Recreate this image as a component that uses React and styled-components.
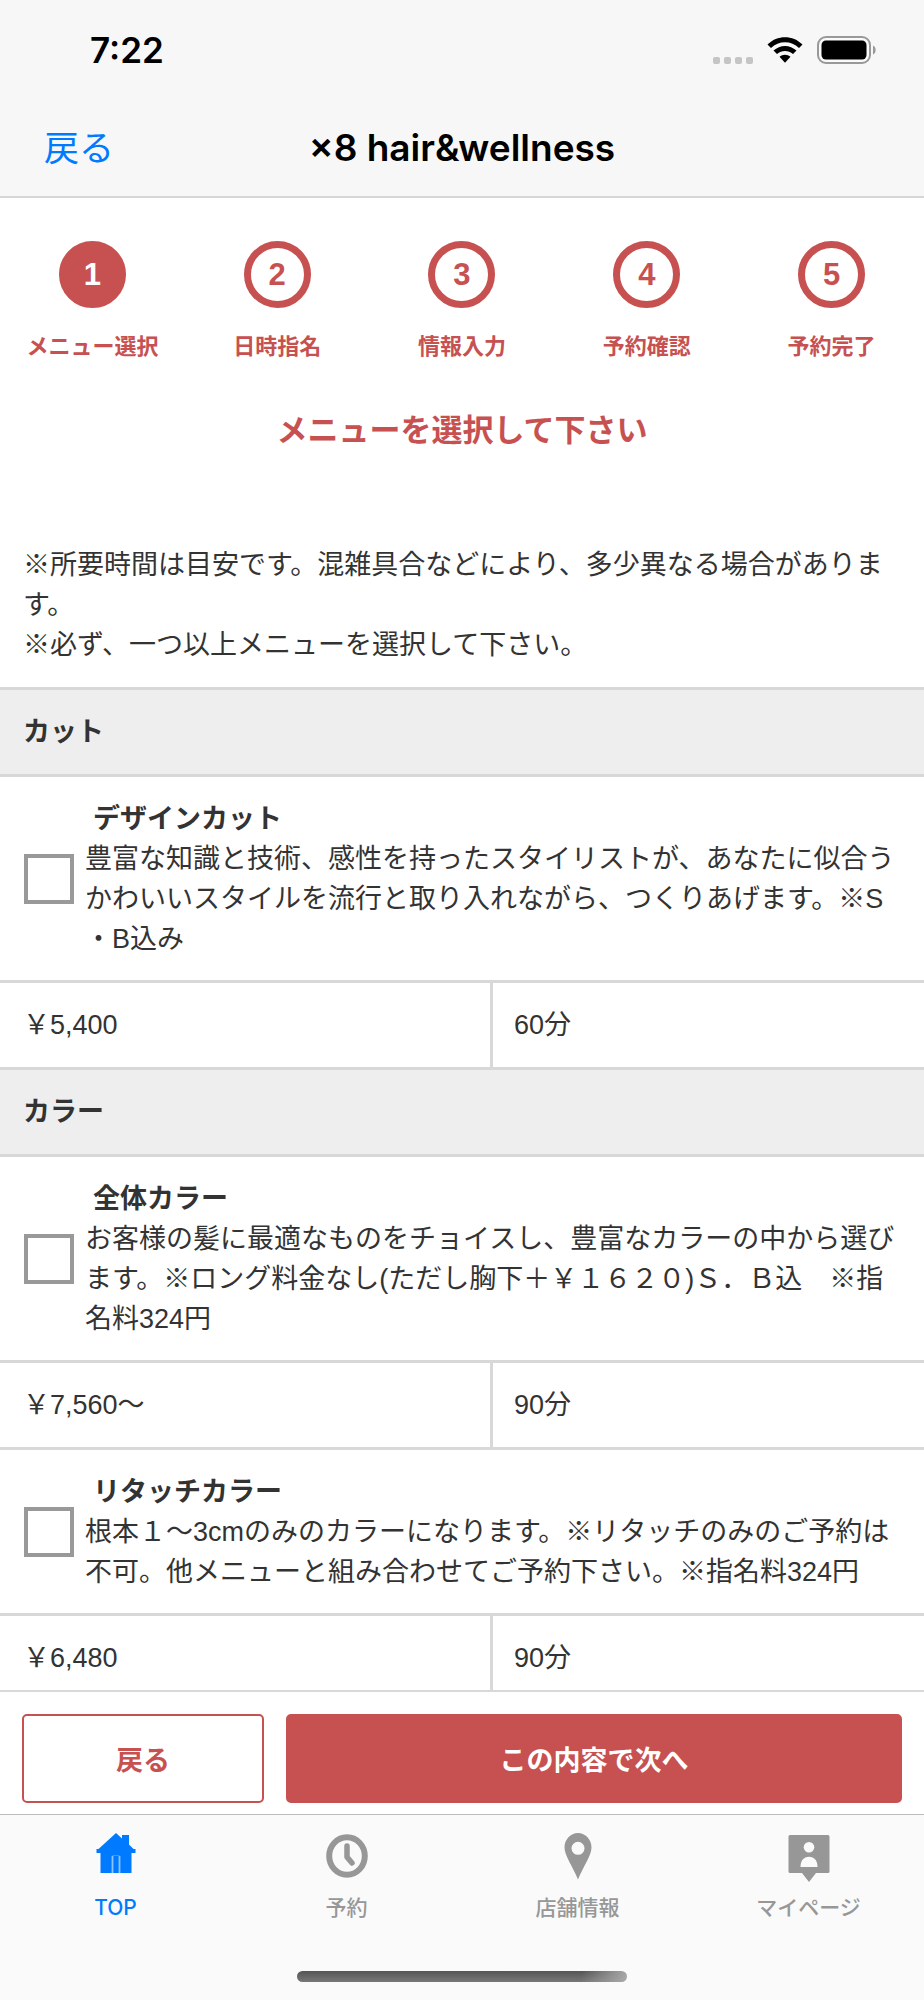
import { Fragment } from 'react'
import styled, { createGlobalStyle } from 'styled-components'

const red = '#c75151'
const blue = '#007aff'
const line = '#d8d8d8'
const systemFont = '"Inter", "Noto Sans CJK JP", sans-serif'

const GlobalStyle = createGlobalStyle`
  * {
    box-sizing: border-box;
  }
  body {
    margin: 0;
    color: #333;
    background: #fff;
    font-family: "Liberation Sans", "Noto Sans CJK JP", sans-serif;
    font-size: 27px;
    line-height: 40px;
  }
`

const Screen = styled.div`
  display: flex;
  flex-direction: column;
  height: 100vh;
`

// ---------- header ----------

const Header = styled.header`
  flex: none;
  color: #000;
  background: #f7f7f7;
  border-bottom: 2px solid #d6d6d8;
  font-family: ${systemFont};
`

const StatusBar = styled.div`
  display: flex;
  align-items: center;
  justify-content: space-between;
  height: 100px;
  padding: 0 47px 0 90px;
`

const Time = styled.time`
  font-size: 35px;
  font-weight: 600;
`

const StatusIcons = styled.div`
  display: flex;
  align-items: center;
  gap: 14px;
`

const Signal = styled.div`
  display: flex;
  gap: 4px;
  padding-top: 20px;
`

const SignalDot = styled.span`
  width: 7px;
  height: 7px;
  border-radius: 2px;
  background: #c5c5c5;
`

const NavBar = styled.div`
  display: grid;
  grid-template-columns: 1fr auto 1fr;
  align-items: center;
  height: 96px;
  padding: 0 44px;
`

const BackLink = styled.a`
  color: ${blue};
  font-size: 35px;
  text-decoration: none;
`

const ShopName = styled.h1`
  margin: 0;
  font-size: 37px;
  font-weight: 600;
`

// ---------- content ----------

const Content = styled.main`
  flex: 1;
  min-height: 0;
  overflow-y: auto;
  scrollbar-width: none;
`

const Steps = styled.ol`
  display: flex;
  margin: 0;
  padding: 43px 0 0;
  list-style: none;
`

const Step = styled.li`
  flex: 1;
  display: flex;
  flex-direction: column;
  align-items: center;
  gap: 24px;
  color: ${red};
  font-size: 22px;
  font-weight: bold;
  line-height: 30px;
`

const StepNumber = styled.span`
  display: flex;
  align-items: center;
  justify-content: center;
  width: 67px;
  height: 67px;
  border: 7px solid ${red};
  border-radius: 50%;
  font-size: 31px;
  color: ${(props) => (props.$active ? '#fff' : red)};
  background: ${(props) => (props.$active ? red : '#fff')};
`

const PageTitle = styled.h2`
  margin: 49px 0 94px;
  color: ${red};
  font-size: 31px;
  text-align: center;
`

const Notes = styled.div`
  padding: 0 23px 22px;

  p {
    margin: 0;
  }
`

const MenuTable = styled.table`
  width: 100%;
  border-collapse: collapse;
  table-layout: fixed;
`

const Category = styled.th`
  padding: 22px 23px;
  border-top: 3px solid ${line};
  border-bottom: 3px solid ${line};
  background: #eee;
  text-align: left;
`

const MenuCell = styled.td`
  padding: 22px 23px 21px 24px;
  border-bottom: 3px solid ${line};
`

const MenuLabel = styled.label`
  display: flex;
  align-items: center;
  gap: 11px;
`

const Checkbox = styled.input`
  appearance: none;
  flex: none;
  width: 50px;
  height: 50px;
  margin: 0;
  border: 4px solid #999;
  background: #fff;

  &:checked {
    background: ${red};
  }
`

const MenuText = styled.span`
  line-break: anywhere;
`

const MenuName = styled.strong`
  display: block;
  padding-left: 8px;
`

const InfoCell = styled.td`
  padding: 22px 23px;
  border-bottom: 3px solid ${line};

  & + & {
    padding-left: 21px;
    border-left: 3px solid ${line};
  }
`

// ---------- buttons ----------

const Actions = styled.div`
  flex: none;
  display: grid;
  grid-template-columns: 11fr 28fr;
  gap: 22px;
  padding: 22px 22px 11px;
  border-top: 2px solid ${line};
`

const ActionButton = styled.button`
  height: 89px;
  padding: 0;
  border: 2px solid ${red};
  border-radius: 5px;
  color: ${(props) => (props.$primary ? '#fff' : red)};
  background: ${(props) => (props.$primary ? red : '#fff')};
  font-family: inherit;
  font-size: 27px;
  font-weight: bold;
`

// ---------- tab bar ----------

const TabBar = styled.footer`
  flex: none;
  padding-bottom: 18px;
  border-top: 1px solid #bcbcbc;
  background: #fafafa;
  font-family: ${systemFont};
`

const Tabs = styled.nav`
  display: flex;
  padding: 17px 0 48px;
`

const Tab = styled.a`
  flex: 1;
  display: flex;
  flex-direction: column;
  align-items: center;
  gap: 9px;
  color: ${(props) => (props.$active ? blue : '#979797')};
  font-size: 21px;
  font-weight: 500;
  line-height: 30px;
  text-decoration: none;
`

const HomeIndicator = styled.div`
  width: 330px;
  height: 11px;
  margin: 0 auto;
  border-radius: 6px;
  background:
    linear-gradient(100deg, transparent 86%, #aaa 100%),
    linear-gradient(#555, #777);
`

const WifiIcon = () => (
  <svg width="36" height="28" viewBox="0 0 36 28" aria-hidden="true">
    <path d="M0.5 8.5C10 -1.3 26 -1.3 35.5 8.5L32 12C24.5 4.3 11.5 4.3 4 12Z" />
    <path d="M6.5 14.6C13 8.3 23 8.3 29.5 14.6L26 18.1C21.5 13.9 14.5 13.9 10 18.1Z" />
    <path d="M12.5 20.7C15.5 18 20.5 18 23.5 20.7L18 26.8Z" />
  </svg>
)

const BatteryIcon = () => (
  <svg width="60" height="28" viewBox="0 0 60 28" aria-hidden="true">
    <rect x="1" y="1" width="52" height="26" rx="8" fill="#fafafa" stroke="#999" strokeWidth="2" />
    <rect x="4.5" y="4.5" width="45" height="19" rx="4.5" />
    <path d="M56 9.5C59.5 11 59.5 17 56 18.5Z" fill="#999" />
  </svg>
)

const HomeIcon = () => (
  <svg width="48" height="52" viewBox="0 0 48 52" aria-hidden="true">
    <path
      d="M24 1L30 6.5V3H37V12.5L41.5 17H43.5V21H39.5V41H8.5V21H4.5V17H6.5Z"
      fill="currentColor"
    />
    <path d="M20.5 41V24M27.5 24V41" stroke="#8cc4ff" strokeWidth="1.8" />
    <path d="M20.5 23.5H27.5" stroke="#3c9aff" strokeWidth="1" />
  </svg>
)

const ClockIcon = () => (
  <svg width="48" height="52" viewBox="0 0 48 52" aria-hidden="true">
    <ellipse cx="24" cy="24" rx="17.8" ry="18.8" fill="none" stroke="currentColor" strokeWidth="6" />
    <path
      d="M24 14V25L29 31"
      fill="none"
      stroke="currentColor"
      strokeWidth="5.5"
      strokeLinecap="round"
      strokeLinejoin="round"
    />
  </svg>
)

const PinIcon = () => (
  <svg width="48" height="52" viewBox="0 0 48 52" aria-hidden="true">
    <path
      fillRule="evenodd"
      d="M24 1C31.5 1 37.5 7.5 37.5 15.5C37.5 23.5 29.5 34 24 47.5C18.5 34 10.5 23.5 10.5 15.5C10.5 7.5 16.5 1 24 1ZM24 9.8A6.5 6.5 0 1 0 24 22.8A6.5 6.5 0 1 0 24 9.8Z"
      fill="currentColor"
    />
  </svg>
)

const MyPageIcon = () => (
  <svg width="48" height="52" viewBox="0 0 48 52" aria-hidden="true">
    <path
      d="M5 3H43Q44.5 3 44.5 4.5V39.5Q44.500 41 43 41H31L24 50L17 41H5Q3.5 41 3.5 39.5V4.5Q3.5 3 5 3Z"
      fill="currentColor"
    />
    <circle cx="24" cy="15.3" r="5.3" fill="#fafafa" />
    <path d="M15.5 35C15.5 29 18.5 24.8 24 24.8C29.5 24.8 32.5 29 32.5 35Z" fill="#fafafa" />
  </svg>
)

const steps = ['メニュー選択', '日時指名', '情報入力', '予約確認', '予約完了']

const categories = [
  {
    name: 'カット',
    menus: [
      {
        id: 'design-cut',
        name: 'デザインカット',
        text: '豊富な知識と技術、感性を持ったスタイリストが、あなたに似合うかわいいスタイルを流行と取り入れながら、つくりあげます。※S・B込み',
        price: '￥5,400',
        time: '60分',
      },
    ],
  },
  {
    name: 'カラー',
    menus: [
      {
        id: 'full-color',
        name: '全体カラー',
        text: 'お客様の髪に最適なものをチョイスし、豊富なカラーの中から選びます。※ロング料金なし(ただし胸下＋￥１６２０)Ｓ．Ｂ込　※指名料324円',
        price: '￥7,560〜',
        time: '90分',
      },
      {
        id: 'retouch-color',
        name: 'リタッチカラー',
        text: '根本１〜3cmのみのカラーになります。※リタッチのみのご予約は不可。他メニューと組み合わせてご予約下さい。※指名料324円',
        price: '￥6,480',
        time: '90分',
      },
    ],
  },
]

const tabs = [
  { label: 'TOP', Icon: HomeIcon },
  { label: '予約', Icon: ClockIcon },
  { label: '店舗情報', Icon: PinIcon },
  { label: 'マイページ', Icon: MyPageIcon },
]

function App() {
  return (
    <Screen lang="ja">
      <GlobalStyle />
      <Header>
        <StatusBar>
          <Time>7:22</Time>
          <StatusIcons>
            <Signal>
              <SignalDot />
              <SignalDot />
              <SignalDot />
              <SignalDot />
            </Signal>
            <WifiIcon />
            <BatteryIcon />
          </StatusIcons>
        </StatusBar>
        <NavBar>
          <BackLink href="#back">戻る</BackLink>
          <ShopName>×8 hair&amp;wellness</ShopName>
        </NavBar>
      </Header>

      <Content>
        <Steps>
          {steps.map((step, i) => (
            <Step key={step}>
              <StepNumber $active={i === 0}>{i + 1}</StepNumber>
              {step}
            </Step>
          ))}
        </Steps>
        <PageTitle>メニューを選択して下さい</PageTitle>
        <Notes>
          <p>※所要時間は目安です。混雑具合などにより、多少異なる場合があります。</p>
          <p>※必ず、一つ以上メニューを選択して下さい。</p>
        </Notes>

        <MenuTable>
          <colgroup>
            <col width="53.2%" />
            <col />
          </colgroup>
          <tbody>
            {categories.map((category) => (
              <Fragment key={category.name}>
                <tr>
                  <Category colSpan={2}>{category.name}</Category>
                </tr>
                {category.menus.map((menu) => (
                  <Fragment key={menu.id}>
                    <tr>
                      <MenuCell colSpan={2}>
                        <MenuLabel htmlFor={menu.id}>
                          <Checkbox type="checkbox" id={menu.id} />
                          <MenuText>
                            <MenuName>{menu.name}</MenuName>
                            {menu.text}
                          </MenuText>
                        </MenuLabel>
                      </MenuCell>
                    </tr>
                    <tr>
                      <InfoCell>{menu.price}</InfoCell>
                      <InfoCell>{menu.time}</InfoCell>
                    </tr>
                  </Fragment>
                ))}
              </Fragment>
            ))}
          </tbody>
        </MenuTable>
      </Content>

      <Actions>
        <ActionButton type="button">戻る</ActionButton>
        <ActionButton type="button" $primary>
          この内容で次へ
        </ActionButton>
      </Actions>

      <TabBar>
        <Tabs>
          {tabs.map(({ label, Icon }, i) => (
            <Tab key={label} href={`#tab${i + 1}`} $active={i === 0}>
              <Icon />
              {label}
            </Tab>
          ))}
        </Tabs>
        <HomeIndicator />
      </TabBar>
    </Screen>
  )
}

export default App
